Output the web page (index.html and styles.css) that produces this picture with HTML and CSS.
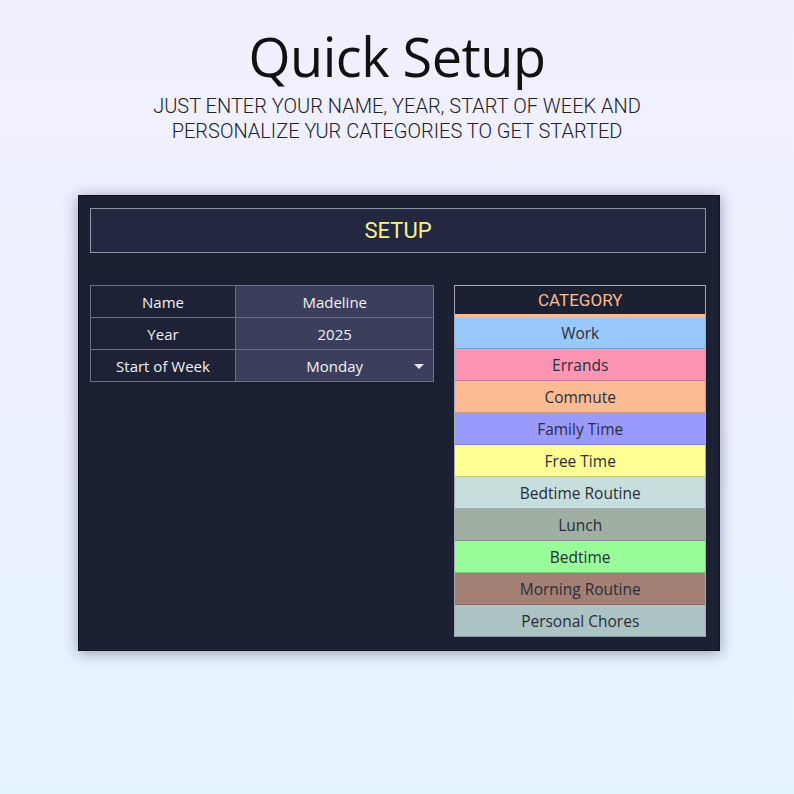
FILE: index.html
```html
<!DOCTYPE html>
<html>
<head>
  <title>Quick Setup</title>
  <meta charset="UTF-8">
  <link rel="stylesheet" href="styles.css">
</head>
<body>
  <div class="intro">
    <h1>Quick Setup</h1>
    <p class="subtitle">Just enter your name, year, start of week and<br>personalize yur categories to get started</p>
  </div>

  <div class="sheet">
    <div class="sheet-title">SETUP</div>

    <div class="sheet-body">
      <table class="setup-table">
        <tr>
          <td class="label">Name</td>
          <td class="value">Madeline</td>
        </tr>
        <tr>
          <td class="label">Year</td>
          <td class="value">2025</td>
        </tr>
        <tr>
          <td class="label">Start of Week</td>
          <td class="value select">Monday<span class="caret"></span></td>
        </tr>
      </table>

      <div class="categories">
        <div class="category-head">CATEGORY</div>
        <div class="category cat-work">Work</div>
        <div class="category cat-errands">Errands</div>
        <div class="category cat-commute">Commute</div>
        <div class="category cat-family">Family Time</div>
        <div class="category cat-free">Free Time</div>
        <div class="category cat-bedroutine">Bedtime Routine</div>
        <div class="category cat-lunch">Lunch</div>
        <div class="category cat-bedtime">Bedtime</div>
        <div class="category cat-morning">Morning Routine</div>
        <div class="category cat-chores">Personal Chores</div>
      </div>
    </div>
  </div>
</body>
</html>
```

FILE: styles.css
```css
:root {
  --sheet-bg: #1c2033;
  --title-bg: #232840;
  --value-bg: #3b3f5c;
  --line: #8e93a6;
  --cell-text: #f1f1f5;
}

* {
  box-sizing: border-box;
  margin: 0;
  padding: 0;
}

html, body {
  height: 100%;
}

body {
  font-family: 'Open Sans', sans-serif;
  background: linear-gradient(180deg, #f1effe 0%, #ebf1ff 60%, #e6f4ff 100%);
  color: #111;
  padding-top: 23px;
}

.intro {
  text-align: center;
}

h1 {
  font-family: 'Open Sans', sans-serif;
  font-weight: 400;
  font-size: 54px;
  line-height: 66px;
  letter-spacing: -0.5px;
  color: #111;
}

.subtitle {
  font-family: 'Roboto', sans-serif;
  font-weight: 300;
  font-size: 20px;
  line-height: 25px;
  text-transform: uppercase;
  color: #222;
  margin-top: 5px;
}

.sheet {
  width: 642px;
  margin: 51px 0 0 78px;
  padding: 12px 13px 13px 11px;
  background-color: var(--sheet-bg);
  border: 1px solid #11141f;
  box-shadow: 0 2px 14px rgba(20, 24, 50, 0.4);
}

.sheet-title {
  height: 45px;
  border: 1px solid var(--line);
  background-color: var(--title-bg);
  color: #f7f28e;
  font-family: 'Roboto', sans-serif;
  font-size: 22px;
  display: flex;
  align-items: center;
  justify-content: center;
}

.sheet-body {
  display: flex;
  align-items: flex-start;
  gap: 20px;
  margin-top: 32px;
}

.setup-table {
  width: 345px;
  border-collapse: collapse;
  border: 1px solid #a6aab8;
  font-size: 15px;
  color: var(--cell-text);
}

.setup-table td {
  height: 32px;
  padding: 0;
  text-align: center;
  border: 1px solid #6d7188;
}

.label {
  width: 145px;
  background-color: #1e2236;
}

.value {
  background-color: var(--value-bg);
}

.select {
  position: relative;
}

.caret {
  position: absolute;
  right: 9px;
  top: 14px;
  border-left: 5px solid transparent;
  border-right: 5px solid transparent;
  border-top: 5px solid #e6e6ee;
}

.categories {
  width: 252px;
  border: 1px solid #a6aab8;
  border-bottom: none;
}

.category-head {
  height: 31px;
  background-color: var(--sheet-bg);
  border-bottom: 3px solid #fdbb94;
  color: #fdbb94;
  font-family: 'Roboto', sans-serif;
  font-size: 17px;
  display: flex;
  align-items: center;
  justify-content: center;
}

.category {
  height: 32px;
  display: flex;
  align-items: center;
  justify-content: center;
  font-size: 15.5px;
  color: #2a2e3a;
  border-bottom: 1px solid rgba(40, 44, 60, 0.25);
}

.cat-work { background-color: #99c8fc; }
.cat-errands { background-color: #fd94b4; }
.cat-commute { background-color: #fdbb94; }
.cat-family { background-color: #9a9afc; }
.cat-free { background-color: #fefe94; }
.cat-bedroutine { background-color: #c6dedc; }
.cat-lunch { background-color: #a1afa2; }
.cat-bedtime { background-color: #98fc98; }
.cat-morning { background-color: #a47f74; }
.cat-chores { background-color: #abc3c2; }
```
